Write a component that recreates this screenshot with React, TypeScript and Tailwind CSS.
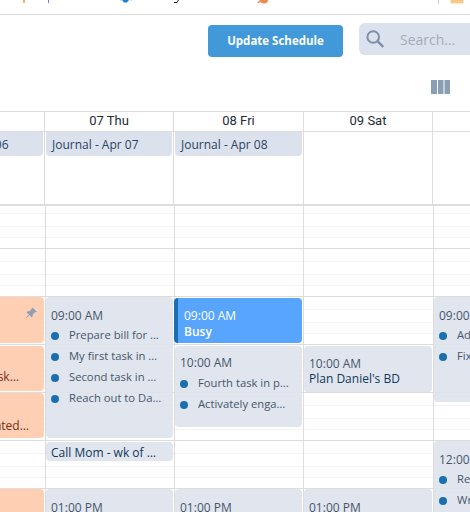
import { BsPinAngleFill } from 'react-icons/bs'

const noto = { fontFamily: '"Open Sans", "Noto Sans", sans-serif' }

function Slot() {
  return (
    <div className="h-[48px] border-b border-[#dddddd] flex flex-col">
      <div className="h-[13px] border-b border-[#f3f3f3]"></div>
      <div className="h-[13px] border-b border-[#f3f3f3]"></div>
      <div className="h-[11px] border-b border-[#f3f3f3]"></div>
    </div>
  )
}

function Bullets({ items }: { items: string[] }) {
  return (
    <div>
      {items.map(item => (
        <div key={item} className="h-[21px] flex items-center gap-[10px] text-[11.25px] text-[#46576c]">
          <span className="w-[8px] h-[8px] rounded-full bg-[#1a6fb0] shrink-0"></span>
          <span className="truncate">{item}</span>
        </div>
      ))}
    </div>
  )
}

const DAYS = [
  { label: '06 Wed', color: 'text-[#1a6fb0] pr-[2px]', border: 'w-[130px]' },
  { label: '07 Thu', color: 'text-[#222b36]', border: 'w-[129px]' },
  { label: '08 Fri', color: 'text-[#222b36]', border: 'w-[130px]' },
  { label: '09 Sat', color: 'text-[#222b36]', border: 'w-[129px]' },
  { label: '10 Sun', color: 'text-[#222b36]', border: 'w-[130px]' },
]

const ALLDAY = [
  { width: 'w-[130px]', text: 'Journal - Apr 06' },
  { width: 'w-[129px]', text: 'Journal - Apr 07' },
  { width: 'w-[130px]', text: 'Journal - Apr 08' },
  { width: 'w-[129px]', text: '' },
  { width: 'w-[130px]', text: '' },
]

export default function App() {
  return (
    <div className="w-[470px] h-[512px] overflow-hidden bg-white flex flex-col" style={noto}>
      {/* clipped nav icons */}
      <div className="h-[15px] border-b border-[#dddddd] shrink-0">
        <svg width="470" height="14" className="block">
          <rect x="23" y="0" width="2" height="3" fill="#f0b070" />
          <rect x="48" y="0" width="1" height="3" fill="#6f7fc0" />
          <path d="M122 0 L129 0 L127 2.5 L124 2.5 Z" fill="#1f7fd0" />
          <path d="M120 0h2M130 0h2" stroke="#9cd0f0" />
          <path d="M174 2.5 L177 2.5 L178.5 0" stroke="#222" fill="none" />
          <path d="M258 3 L261 0" stroke="#ee8a50" strokeWidth="1.5" />
          <path d="M260 0 L268 0 A4 3.5 0 0 1 260 0 Z" fill="#ee8a50" />
          <rect x="438" y="0" width="1" height="4" fill="#c0d0e0" />
          <rect x="451" y="0" width="12" height="3" fill="#fbcf8f" stroke="#eeb060" strokeWidth="0.5" />
        </svg>
      </div>

      {/* toolbar */}
      <div className="flex justify-end gap-[16px] items-start h-[40px] shrink-0">
        <button className="mt-[10px] w-[135px] h-[32px] rounded bg-[#4299d9] text-white text-[11.5px] font-bold">
          Update Schedule
        </button>
        <div className="mt-[8px] w-[111px] h-[32px] rounded-l-md bg-[#dbe2ed] flex items-center pl-[7px] gap-[16px]">
          <svg width="18" height="18" viewBox="0 0 18 18" fill="none" stroke="#7b90a8" strokeWidth="2">
            <circle cx="7.2" cy="7" r="5.8" />
            <path d="M11.5 11.2 L17.2 17" strokeWidth="2.4" />
          </svg>
          <span className="text-[14px] text-[#a3adba]">Search...</span>
        </div>
      </div>

      {/* view switch */}
      <div className="h-[56px] shrink-0 flex justify-end pt-[25px] pr-[20px]">
        <svg width="19" height="14" viewBox="0 0 19 14">
          <rect x="0" width="6" height="14" fill="#8a9eb5" />
          <rect x="7" width="5.5" height="14" fill="#8a9eb5" />
          <rect x="13.5" width="5.5" height="14" fill="#8a9eb5" />
        </svg>
      </div>

      {/* day header */}
      <div className="flex ml-[-85px] w-[650px] h-[21px] shrink-0 border-y border-[#dddddd]">
        {DAYS.map(day => (
          <div
            key={day.label}
            className={`${day.border} ${day.color} border-r border-[#dddddd] text-center text-[13px] leading-[18px] h-[19px]`}
            style={{ fontFamily: 'Roboto, sans-serif' }}
          >
            {day.label}
          </div>
        ))}
      </div>

      {/* all day row */}
      <div className="flex ml-[-85px] w-[650px] h-[74px] shrink-0 border-b-2 border-[#dddddd]">
        {ALLDAY.map((cell, i) => (
          <div key={i} className={`${cell.width} border-r border-[#dddddd] pl-px pr-px`}>
            {cell.text && (
              <div className="h-[24px] rounded-b bg-[#dbe2ed] pl-[6px] text-[12px] leading-[26px] text-[#2a4460]">
                {cell.text}
              </div>
            )}
          </div>
        ))}
      </div>

      {/* time grid */}
      <div className="flex-1 min-h-0 overflow-hidden">
        <div className="flex ml-[-85px] w-[650px] mt-[-5px]">
          {/* 06 */}
          <div className="w-[131px] border-r border-[#dddddd] relative">
            {[0, 1, 2, 3, 4, 5, 6].map(i => <Slot key={i} />)}
            <div className="absolute left-0 right-px top-[96px] h-[46px] rounded bg-[#ffcfb3]">
              <BsPinAngleFill className="absolute right-[7px] top-[10px] w-[12px] h-[12px] text-[#8a9eb5]" />
            </div>
            <div className="absolute left-0 right-px top-[145px] h-[45px] rounded bg-[#ffcfb3] flex items-end justify-end pr-[25px] pb-[5px] text-[12px] font-medium text-[#7a2e1a]">
              Complete task…
            </div>
            <div className="absolute left-0 right-px top-[192px] h-[45px] rounded bg-[#ffcfb3] flex items-end justify-end pr-[15px] pb-[3px] text-[12px] font-medium text-[#7a2e1a]">
              Automated…
            </div>
            <div className="absolute left-0 right-px top-[288px] h-[60px] rounded bg-[#ffcfb3]"></div>
          </div>

          {/* 07 */}
          <div className="w-[129px] border-r border-[#dddddd] relative">
            {[0, 1, 2, 3, 4, 5, 6].map(i => <Slot key={i} />)}
            <div className="absolute left-0 right-px top-[96px] h-[141px] rounded bg-[#dde2ec]/90 pl-[5px] pt-[11px]">
              <div className="text-[12px] leading-[16px] mb-[1px] text-[#46576c]">09:00 AM</div>
              <Bullets items={['Prepare bill for …', 'My first task in …', 'Second task in …', 'Reach out to Da…']} />
            </div>
            <div className="absolute left-0 right-px top-[241px] h-[19px] rounded bg-[#dde2ec]/90 pl-[5px] text-[12px] leading-[22px] font-medium text-[#12385a] overflow-hidden">
              Call Mom - wk of …
            </div>
            <div className="absolute left-0 right-px top-[288px] h-[60px] rounded bg-[#dde2ec]/90 pl-[5px] pt-[11px] text-[12px] leading-[16px] text-[#46576c]">
              01:00 PM
            </div>
          </div>

          {/* 08 */}
          <div className="w-[129px] border-r border-[#dddddd] relative">
            {[0, 1, 2, 3, 4, 5, 6].map(i => <Slot key={i} />)}
            <div className="absolute left-[-1px] right-px top-[97px] h-[45px] rounded-r rounded-l-sm bg-[#57a5ff] border-l-4 border-[#1a6fb0] pl-[6px] pt-[10px] text-[12px] leading-[16px] text-white">
              <div>09:00 AM</div>
              <div className="font-semibold">Busy</div>
            </div>
            <div className="absolute left-0 right-px top-[145px] h-[81px] rounded bg-[#dde2ec]/90 pl-[5px] pt-[9px]">
              <div className="text-[12px] leading-[16px] mb-[2px] text-[#46576c]">10:00 AM</div>
              <Bullets items={['Fourth task in p…', 'Activately enga…']} />
            </div>
            <div className="absolute left-0 right-px top-[288px] h-[60px] rounded bg-[#dde2ec]/90 pl-[5px] pt-[11px] text-[12px] leading-[16px] text-[#46576c]">
              01:00 PM
            </div>
          </div>

          {/* 09 */}
          <div className="w-[130px] border-r border-[#dddddd] relative">
            {[0, 1, 2, 3, 4, 5, 6].map(i => <Slot key={i} />)}
            <div className="absolute left-0 right-px top-[145px] h-[46px] rounded bg-[#dde2ec]/90 pl-[5px] pt-[10px] text-[12px] leading-[15px]">
              <div className="text-[#46576c]">10:00 AM</div>
              <div className="font-medium text-[#12385a]">Plan Daniel's BD</div>
            </div>
            <div className="absolute left-0 right-px top-[288px] h-[60px] rounded bg-[#dde2ec]/90 pl-[5px] pt-[11px] text-[12px] leading-[16px] text-[#46576c]">
              01:00 PM
            </div>
          </div>

          {/* 10 */}
          <div className="w-[131px] relative">
            {[0, 1, 2, 3, 4, 5, 6].map(i => <Slot key={i} />)}
            <div className="absolute left-0 right-px top-[96px] h-[105px] rounded bg-[#dde2ec]/90 pl-[5px] pt-[11px]">
              <div className="text-[12px] leading-[16px] mb-[1px] text-[#46576c]">09:00 AM</div>
              <Bullets items={['Add notes to …', 'Fix the sink …']} />
            </div>
            <div className="absolute left-0 right-px top-[240px] h-[110px] rounded bg-[#dde2ec]/90 pl-[5px] pt-[11px]">
              <div className="text-[12px] leading-[16px] mb-[1px] text-[#46576c]">12:00 PM</div>
              <Bullets items={['Review the …', 'Write up …']} />
            </div>
          </div>
        </div>
      </div>
    </div>
  )
}
